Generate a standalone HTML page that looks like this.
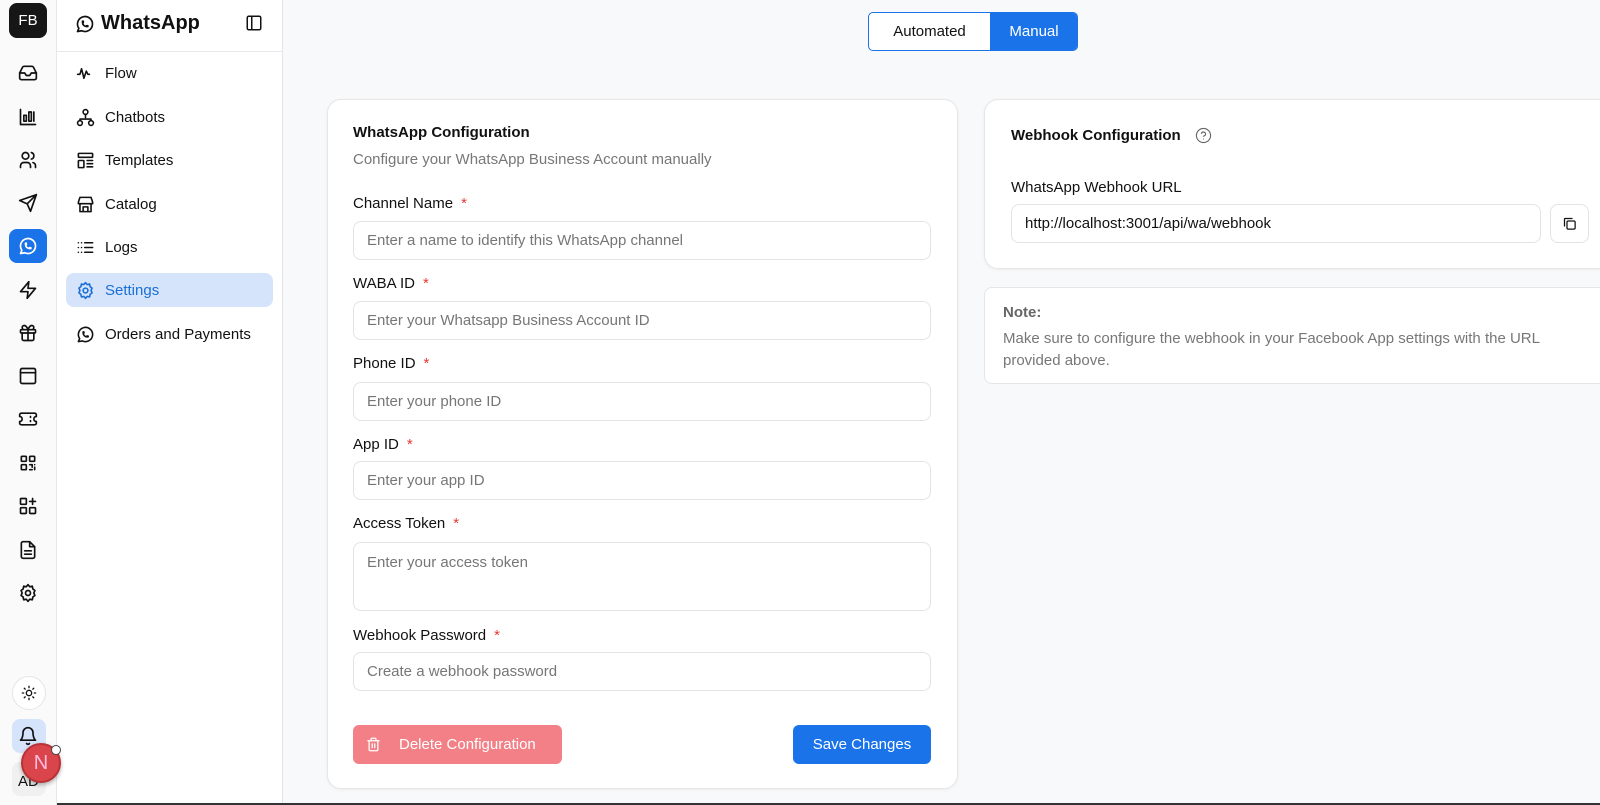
<!DOCTYPE html>
<html><head><meta charset="utf-8"><style>
*{box-sizing:border-box;margin:0;padding:0}
body{width:1600px;height:805px;overflow:hidden;background:#f8f9fa;font-family:"Liberation Sans",sans-serif;color:#111;position:relative}
.a{position:absolute}
.rail{left:0;top:0;width:57px;height:805px;background:#fafafa;border-right:1px solid #e8e8e8;z-index:3}
.ri{position:absolute;left:18px;width:20px;height:20px}
svg{fill:none;stroke:currentColor;stroke-width:2;stroke-linecap:round;stroke-linejoin:round}
.side{left:57px;top:0;width:226px;height:805px;background:#fff;border-right:1px solid #e5e5e5}
.it{position:absolute;left:19px;height:34px;display:flex;align-items:center;font-size:15px;color:#111}
.it svg{width:19px;height:19px;margin-right:10px}
.card{background:#fff;border:1px solid #e6e6e6;border-radius:14px;box-shadow:0 1px 3px rgba(0,0,0,.05)}
.lbl{position:absolute;left:353px;font-size:15px;color:#111}
.lbl b{color:#e53935;font-weight:normal;margin-left:8px}
.inp{position:absolute;left:353px;width:578px;height:39px;border:1px solid #e3e3e3;border-radius:8px;background:#fff;font-size:15px;color:#767676;padding:0 13px;line-height:37px}
</style></head><body>
<div class="a rail">
 <div class="a" style="left:9px;top:3px;width:38px;height:35px;background:#161616;border-radius:8px;color:#fff;font-size:15px;text-align:center;line-height:35px">FB</div>
 <svg class="ri" style="top:63px" viewBox="0 0 24 24"><path d="M22 12h-6l-2 3h-4l-2-3H2"/><path d="M5.45 5.11 2 12v6a2 2 0 0 0 2 2h16a2 2 0 0 0 2-2v-6l-3.45-6.89A2 2 0 0 0 16.76 4H7.24a2 2 0 0 0-1.790 1.11z"/></svg>
 <svg class="ri" style="top:107px" viewBox="0 0 24 24"><path d="M3 3v18h18"/><rect x="7" y="10" width="3" height="7"/><rect x="13" y="6" width="3" height="11"/><path d="M19 6v11"/></svg>
 <svg class="ri" style="top:150px" viewBox="0 0 24 24"><circle cx="9" cy="7" r="4"/><path d="M3 21v-2a4 4 0 0 1 4-4h4a4 4 0 0 1 4 4v2M16 3.13a4 4 0 0 1 0 7.75M21 21v-2a4 4 0 0 0-3-3.85"/></svg>
 <svg class="ri" style="top:193px" viewBox="0 0 24 24"><path d="M22 2 11 13M22 2l-7 20-4-9-9-4z"/></svg>
 <div class="a" style="left:9px;top:229px;width:38px;height:34px;background:#1a73e8;border-radius:8px"></div>
 <svg class="ri" style="top:236px;color:#fff" viewBox="0 0 24 24"><path d="M3 21l1.65-3.8a9 9 0 1 1 3.4 2.9z"/><path d="M9 10a.5.5 0 0 0 1 0V9a.5.5 0 0 0-1 0v1a5 5 0 0 0 5 5h1a.5.5 0 0 0 0-1h-1a.5.5 0 0 0 0 1"/></svg>
 <svg class="ri" style="top:280px" viewBox="0 0 24 24"><path d="M13 2 3 14h9l-1 8 10-12h-9z"/></svg>
 <svg class="ri" style="top:323px" viewBox="0 0 24 24"><rect x="3" y="8" width="18" height="4" rx="1"/><path d="M12 8v13M19 12v7a2 2 0 0 1-2 2H7a2 2 0 0 1-2-2v-7M7.5 8a2.5 2.5 0 0 1 0-5C10 3 12 8 12 8s2-5 4.5-5a2.5 2.5 0 0 1 0 5"/></svg>
 <svg class="ri" style="top:366px" viewBox="0 0 24 24"><rect x="3" y="3" width="18" height="18" rx="2"/><path d="M3 8h18"/></svg>
 <svg class="ri" style="top:409px" viewBox="0 0 24 24"><path d="M2 9a3 3 0 0 1 0 6v2a2 2 0 0 0 2 2h16a2 2 0 0 0 2-2v-2a3 3 0 0 1 0-6V7a2 2 0 0 0-2-2H4a2 2 0 0 0-2 2z"/><path d="M15 9v1M15 14v1"/></svg>
 <svg class="ri" style="top:453px" viewBox="0 0 24 24"><rect x="4" y="4" width="6" height="6" rx="1"/><rect x="14" y="4" width="6" height="6" rx="1"/><rect x="4" y="14" width="6" height="6" rx="1"/><path d="M14 14h3v3M20 14v.01M14 20h3M20 17v3"/></svg>
 <svg class="ri" style="top:496px" viewBox="0 0 24 24"><rect x="3" y="3" width="7" height="7" rx="1"/><rect x="3" y="14" width="7" height="7" rx="1"/><rect x="14" y="14" width="7" height="7" rx="1"/><path d="M14 6.5h7M17.5 3v7"/></svg>
 <svg class="ri" style="top:540px" viewBox="0 0 24 24"><path d="M14 2H6a2 2 0 0 0-2 2v16a2 2 0 0 0 2 2h12a2 2 0 0 0 2-2V8z"/><path d="M14 2v6h6M8 13h8M8 17h8"/></svg>
 <svg class="ri" style="top:583px" viewBox="0 0 24 24"><circle cx="12" cy="12" r="3"/><path d="M12 2l2 2.5 3.2-.6.6 3.2L20.3 9 19 12l1.3 3-2.5 1.9-.6 3.2-3.2-.6L12 22l-2-2.5-3.2.6-.6-3.2L3.7 15 5 12 3.7 9l2.5-1.9.6-3.2 3.2.6z"/></svg>
 <div class="a" style="left:12px;top:676px;width:34px;height:34px;border-radius:50%;background:#fff;border:1px solid #e5e5e5"></div>
 <svg class="ri" style="top:685px;width:16px;height:16px;left:21px" viewBox="0 0 24 24"><circle cx="12" cy="12" r="4"/><path d="M12 2v2M12 20v2M4.9 4.9l1.4 1.4M17.7 17.7l1.4 1.4M2 12h2M20 12h2M4.9 19.1l1.4-1.4M17.7 6.3l1.4-1.4"/></svg>
 <div class="a" style="left:12px;top:719px;width:34px;height:34px;border-radius:8px;background:#d6e4fb"></div>
 <svg class="ri" style="top:726px" viewBox="0 0 24 24"><path d="M6 8a6 6 0 0 1 12 0c0 7 3 9 3 9H3s3-2 3-9M10.3 21a1.94 1.94 0 0 0 3.4 0"/></svg>
 <div class="a" style="left:12px;top:762px;width:34px;height:34px;border-radius:8px;background:#f0f0f0;font-size:15px;line-height:40px;padding-left:6px">AD</div>
 <div class="a" style="left:21px;top:743px;width:40px;height:40px;border-radius:50%;background:#d9454a;border:2px solid #b83237;color:#fbd;font-size:20px;text-align:center;line-height:36px;box-shadow:0 2px 4px rgba(0,0,0,.3)">N</div>
 <div class="a" style="left:51px;top:745px;width:10px;height:10px;border-radius:50%;background:#fff;border:1px solid #444"></div>
</div>
<div class="a side">
 <svg class="a" style="left:18px;top:14px;width:20px;height:20px" viewBox="0 0 24 24"><path d="M3 21l1.65-3.8a9 9 0 1 1 3.4 2.9z"/><path d="M9 10a.5.5 0 0 0 1 0V9a.5.5 0 0 0-1 0v1a5 5 0 0 0 5 5h1a.5.5 0 0 0 0-1h-1a.5.5 0 0 0 0 1"/></svg>
 <div class="a" style="left:44px;top:12px;font-size:20px;font-weight:bold">WhatsApp</div>
 <svg class="a" style="left:188px;top:14px;width:18px;height:18px" viewBox="0 0 24 24"><rect x="3" y="3" width="18" height="18" rx="2"/><path d="M9 3v18"/></svg>
 <div class="a" style="left:0;top:51px;width:226px;border-top:1px solid #e8e8e8"></div>
 <div class="it" style="top:56px"><svg viewBox="0 0 24 24"><path d="M2 13h3l2-7 3 12 3-9 2 4h2"/></svg>Flow</div>
 <div class="it" style="top:100px"><svg viewBox="0 0 24 24"><circle cx="12" cy="5" r="3"/><circle cx="5" cy="19" r="3"/><circle cx="19" cy="19" r="3"/><path d="M12 8v4M5 16v-2h14v2"/></svg>Chatbots</div>
 <div class="it" style="top:143px"><svg viewBox="0 0 24 24"><rect x="3" y="3" width="18" height="5" rx="1"/><rect x="3" y="12" width="7" height="9" rx="1"/><path d="M14 12h7M14 16h7M14 20h7"/></svg>Templates</div>
 <div class="it" style="top:187px"><svg viewBox="0 0 24 24"><path d="M3 9l2-6h14l2 6v2H3zM5 11v10h14V11M9 21v-6h6v6"/></svg>Catalog</div>
 <div class="it" style="top:230px"><svg viewBox="0 0 24 24"><path d="M3 6h.01M3 12h.01M3 18h.01M7 6h.01M7 12h.01M7 18h.01M11 6h10M11 12h10M11 18h10"/></svg>Logs</div>
 <div class="a" style="left:9px;top:273px;width:207px;height:34px;background:#d6e4fb;border-radius:8px"></div>
 <div class="it" style="top:273px;color:#1a6fd6"><svg viewBox="0 0 24 24"><circle cx="12" cy="12" r="3"/><path d="M12 2l2 2.5 3.2-.6.6 3.2L20.3 9 19 12l1.3 3-2.5 1.9-.6 3.2-3.2-.6L12 22l-2-2.5-3.2.6-.6-3.2L3.7 15 5 12 3.7 9l2.5-1.9.6-3.2 3.2.6z"/></svg>Settings</div>
 <div class="it" style="top:317px"><svg viewBox="0 0 24 24"><path d="M3 21l1.65-3.8a9 9 0 1 1 3.4 2.9z"/><path d="M9 10a.5.5 0 0 0 1 0V9a.5.5 0 0 0-1 0v1a5 5 0 0 0 5 5h1a.5.5 0 0 0 0-1h-1a.5.5 0 0 0 0 1"/></svg>Orders and Payments</div>
</div>
<div class="a" style="left:868px;top:12px;width:210px;height:39px;border:1px solid #1a73e8;border-radius:5px;background:#fff;overflow:hidden">
 <div class="a" style="left:0;top:0;width:121px;height:37px;text-align:center;line-height:37px;font-size:15px">Automated</div>
 <div class="a" style="left:121px;top:0;width:88px;height:37px;background:#1a73e8;color:#fff;text-align:center;line-height:37px;font-size:15px">Manual</div>
</div>
<div class="a card" style="left:327px;top:99px;width:631px;height:690px"></div>
<div class="a" style="left:353px;top:124px;font-size:15px;font-weight:bold">WhatsApp Configuration</div>
<div class="a" style="left:353px;top:151px;font-size:15px;color:#777">Configure your WhatsApp Business Account manually</div>
<div class="lbl" style="top:195px">Channel Name<b>*</b></div>
<div class="inp" style="top:221px">Enter a name to identify this WhatsApp channel</div>
<div class="lbl" style="top:275px">WABA ID<b>*</b></div>
<div class="inp" style="top:301px">Enter your Whatsapp Business Account ID</div>
<div class="lbl" style="top:355px">Phone ID<b>*</b></div>
<div class="inp" style="top:382px">Enter your phone ID</div>
<div class="lbl" style="top:436px">App ID<b>*</b></div>
<div class="inp" style="top:461px">Enter your app ID</div>
<div class="lbl" style="top:515px">Access Token<b>*</b></div>
<div class="inp" style="top:542px;height:69px;line-height:1;padding-top:12px">Enter your access token</div>
<div class="lbl" style="top:627px">Webhook Password<b>*</b></div>
<div class="inp" style="top:652px">Create a webhook password</div>
<div class="a" style="left:353px;top:725px;width:209px;height:39px;background:#f28086;border-radius:6px;color:#fff;font-size:15px;line-height:39px;padding-left:46px">Delete Configuration</div>
<svg class="a" style="left:366px;top:737px;width:15px;height:15px;color:#fff" viewBox="0 0 24 24"><path d="M3 6h18M19 6v14a2 2 0 0 1-2 2H7a2 2 0 0 1-2-2V6M8 6V4a2 2 0 0 1 2-2h4a2 2 0 0 1 2 2v2M10 11v6M14 11v6"/></svg>
<div class="a" style="left:793px;top:725px;width:138px;height:39px;background:#1a73e8;border-radius:6px;color:#fff;font-size:15px;line-height:39px;text-align:center">Save Changes</div>
<div class="a card" style="left:984px;top:99px;width:640px;height:170px"></div>
<div class="a" style="left:1011px;top:127px;font-size:15px;font-weight:bold">Webhook Configuration</div>
<svg class="a" style="left:1195px;top:127px;width:17px;height:17px;color:#666;stroke-width:1.6" viewBox="0 0 24 24"><circle cx="12" cy="12" r="10"/><path d="M9.1 9a3 3 0 0 1 5.8 1c0 2-3 3-3 3M12 17h.01"/></svg>
<div class="a" style="left:1011px;top:179px;font-size:15px">WhatsApp Webhook URL</div>
<div class="a" style="left:1011px;top:204px;width:530px;height:39px;border:1px solid #e3e3e3;border-radius:8px;background:#fff;font-size:15px;line-height:37px;padding-left:13px">http://localhost:3001/api/wa/webhook</div>
<div class="a" style="left:1550px;top:204px;width:39px;height:39px;border:1px solid #e3e3e3;border-radius:8px;background:#fff"></div>
<svg class="a" style="left:1562px;top:216px;width:15px;height:15px" viewBox="0 0 24 24"><rect x="8" y="8" width="13" height="13" rx="2"/><path d="M4 16V5a1 1 0 0 1 1-1h11"/></svg>
<div class="a card" style="left:984px;top:287px;width:640px;height:97px;border-radius:8px;box-shadow:none"></div>
<div class="a" style="left:1003px;top:304px;font-size:15px;font-weight:bold;color:#666">Note:</div>
<div class="a" style="left:1003px;top:328px;width:580px;font-size:15px;line-height:22px;color:#777">Make sure to configure the webhook in your Facebook App settings with the URL provided above.</div>
<div class="a" style="left:0;top:803px;width:1600px;height:2px;background:#333"></div>
</body></html>
